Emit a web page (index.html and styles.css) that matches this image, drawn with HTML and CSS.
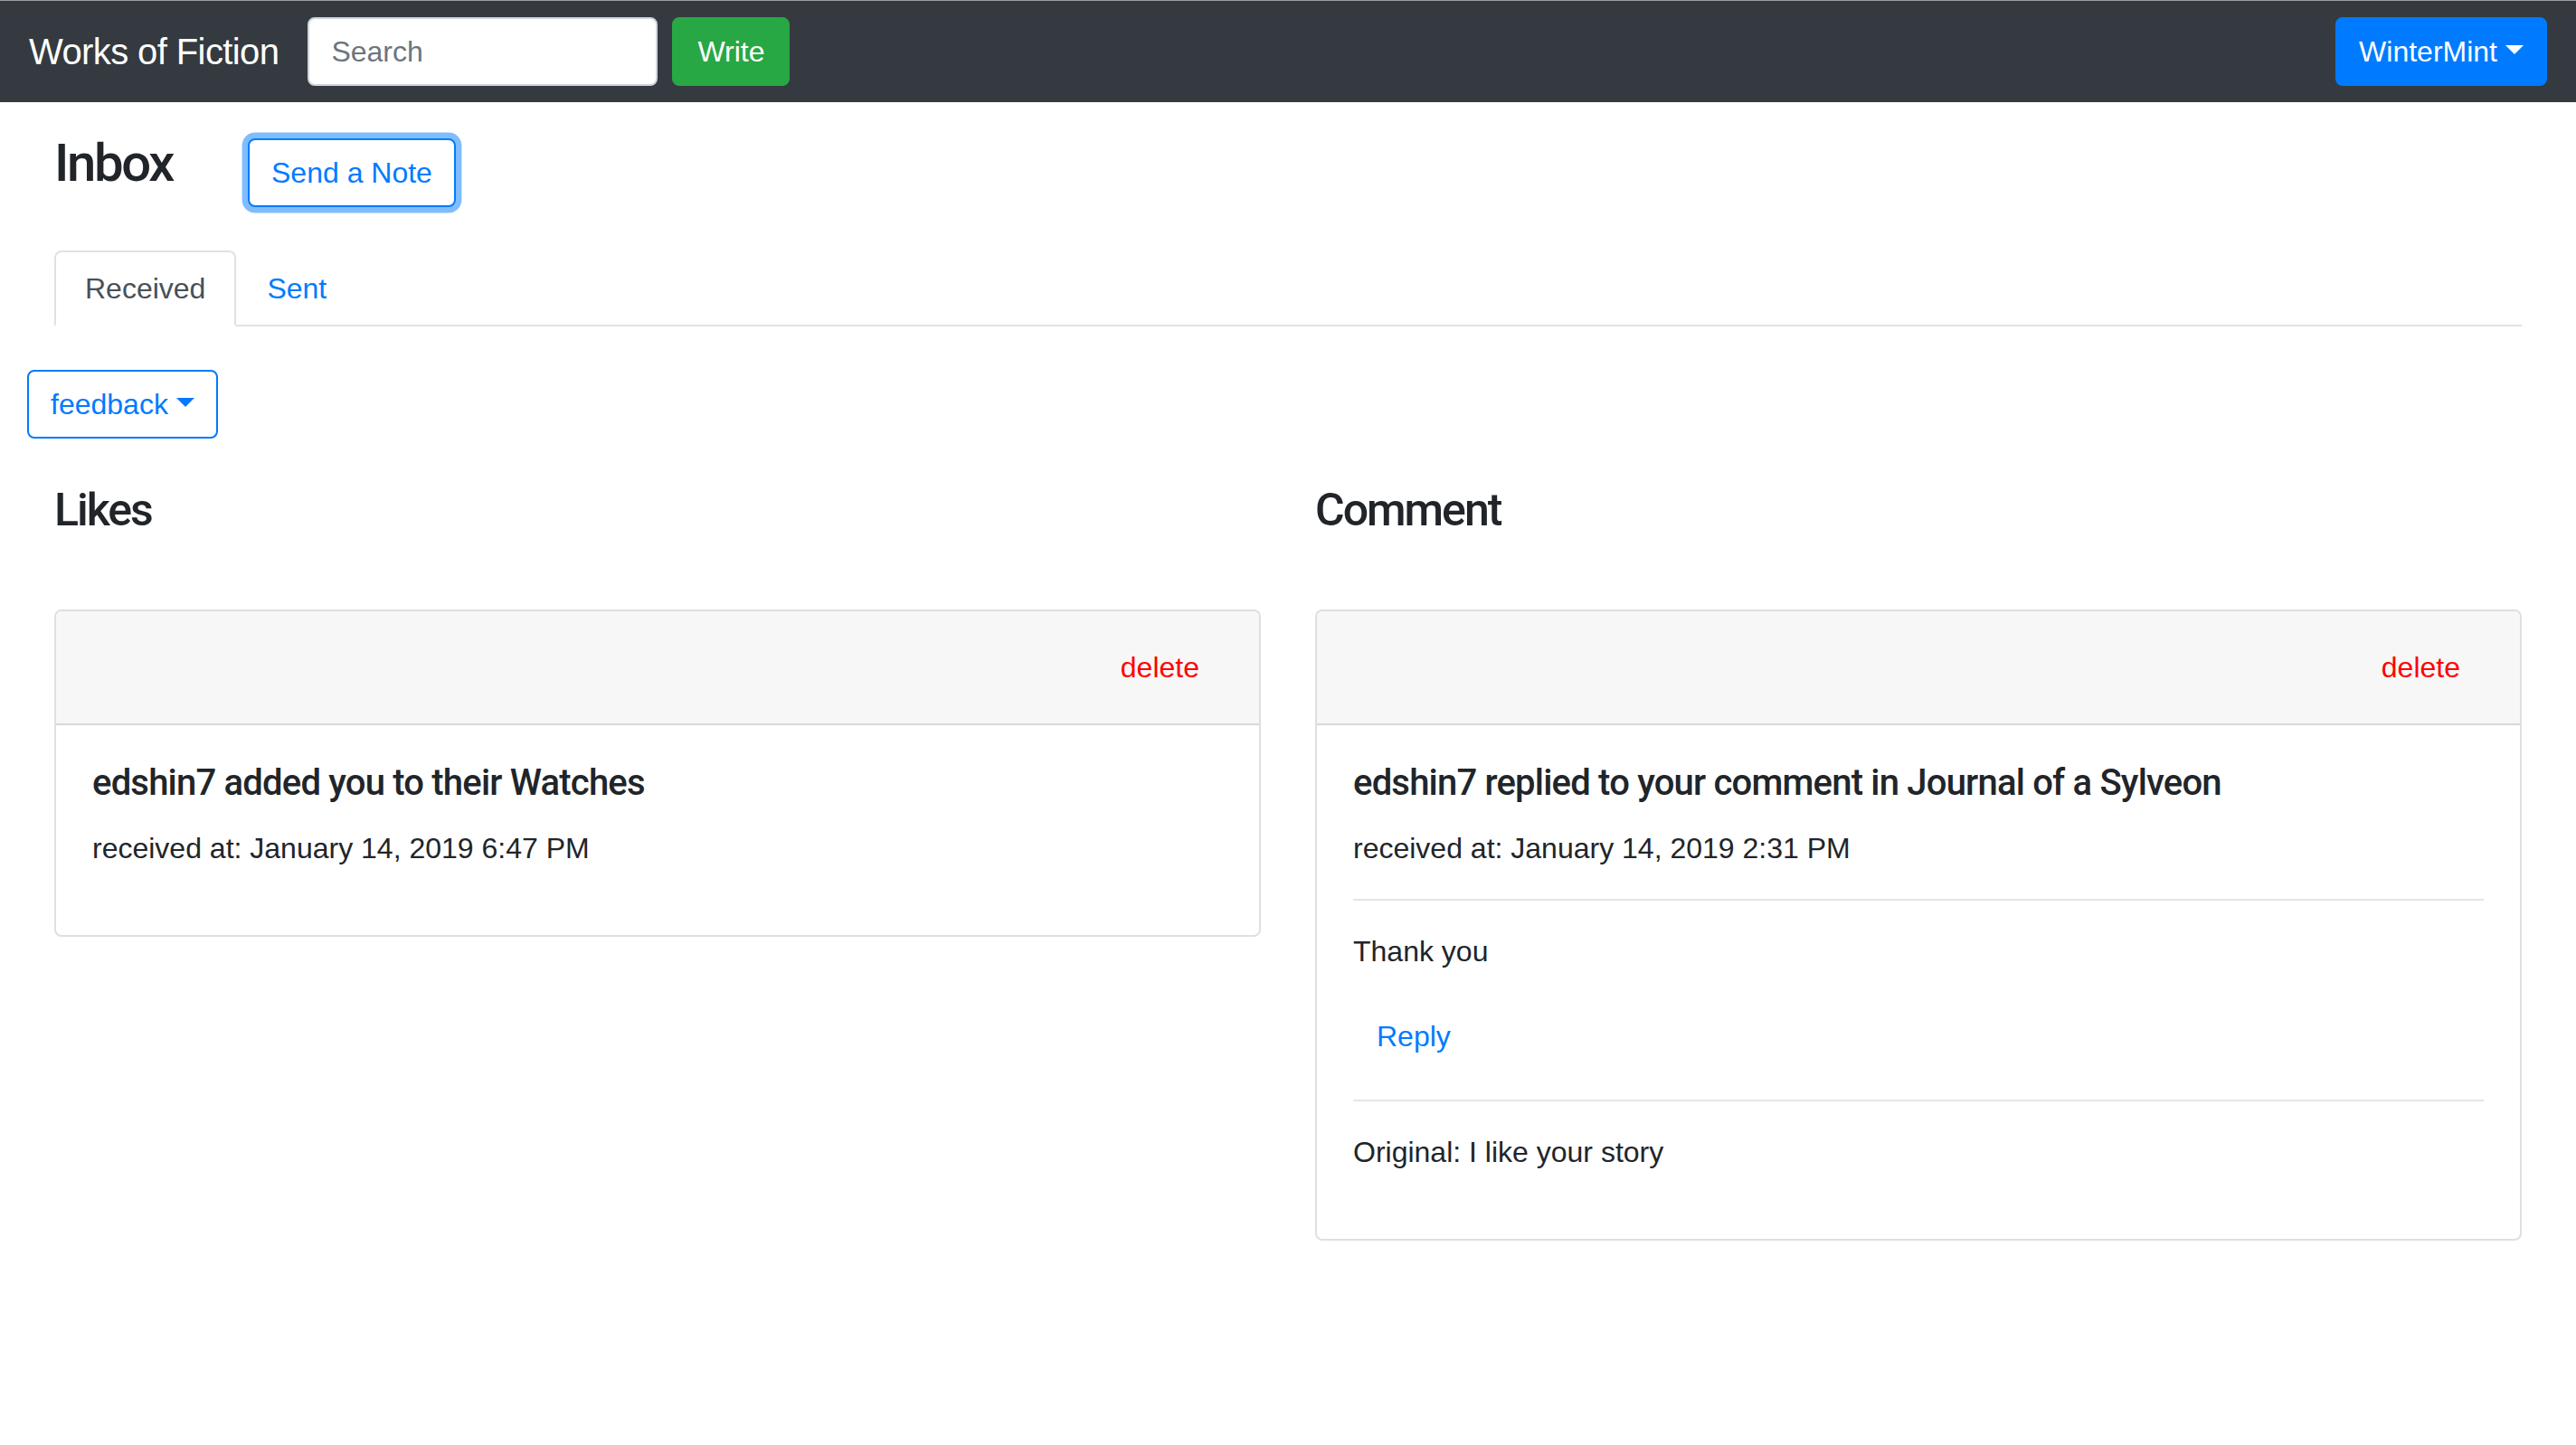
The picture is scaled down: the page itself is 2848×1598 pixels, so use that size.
FILE: index.html
```html
<!DOCTYPE html>
<html lang="en">
<head>
<meta charset="utf-8">
<title>Inbox - Works of Fiction</title>
<link rel="stylesheet" href="styles.css">
</head>
<body>
<nav class="navbar">
  <div class="nav-left">
    <a class="brand" href="#">Works of Fiction</a>
    <input class="search" type="text" placeholder="Search">
    <button class="btn btn-success">Write</button>
  </div>
  <button class="btn btn-primary caret">WinterMint</button>
</nav>

<main class="page">
  <div class="inbox-row">
    <h2 class="page-title">Inbox</h2>
    <button class="btn btn-outline focus">Send a Note</button>
  </div>

  <ul class="tabs">
    <li><a class="tab active" href="#">Received</a></li>
    <li><a class="tab" href="#">Sent</a></li>
  </ul>

  <div class="filter">
    <button class="btn btn-outline caret">feedback</button>
  </div>

  <div class="columns">
    <section class="col">
      <h3 class="col-title">Likes</h3>
      <div class="card">
        <div class="card-header"><button class="btn btn-delete">delete</button></div>
        <div class="card-body">
          <h5 class="card-title">edshin7 added you to their Watches</h5>
          <p>received at: January 14, 2019 6:47 PM</p>
        </div>
      </div>
    </section>
    <section class="col">
      <h3 class="col-title">Comment</h3>
      <div class="card">
        <div class="card-header"><button class="btn btn-delete">delete</button></div>
        <div class="card-body">
          <h5 class="card-title">edshin7 replied to your comment in Journal of a Sylveon</h5>
          <p>received at: January 14, 2019 2:31 PM</p>
          <hr>
          <p>Thank you</p>
          <button class="btn btn-link">Reply</button>
          <hr>
          <p>Original: I like your story</p>
        </div>
      </div>
    </section>
  </div>
</main>
</body>
</html>
```

FILE: styles.css
```css
* { box-sizing: border-box; }

html, body { margin: 0; }

body {
  font-family: "Liberation Sans", Arial, sans-serif;
  font-size: 32px;
  line-height: 1.5;
  color: #212529;
  background: #fff;
}

a { text-decoration: none; }

/* ---------- navbar ---------- */
.navbar {
  display: flex;
  align-items: center;
  justify-content: space-between;
  background: #343a40;
  border-top: 1px solid #9c9ea1;
  padding: 16px 32px;
}

.nav-left {
  display: flex;
  align-items: center;
}

.brand {
  font-size: 40px;
  line-height: 60px;
  letter-spacing: -0.6px;
  padding: 10px 0;
  margin-right: 32px;
  color: #fff;
}

.search {
  width: 387px;
  height: 76px;
  padding: 12px 24px;
  font-family: inherit;
  font-size: 32px;
  line-height: 48px;
  border: 2px solid #ced4da;
  border-radius: 8px;
  color: #495057;
  background: #fff;
  margin: 0 16px 0 0;
}

.search::placeholder { color: #6c757d; }

/* ---------- buttons ---------- */
.btn {
  display: inline-block;
  font-family: inherit;
  font-size: 32px;
  line-height: 48px;
  padding: 12px 24px;
  border: 2px solid transparent;
  border-radius: 8px;
  background: transparent;
  white-space: nowrap;
  cursor: pointer;
}

.btn-success { background: #28a745; border-color: #28a745; color: #fff; padding: 12px 26px; }
.btn-primary { background: #007bff; border-color: #007bff; color: #fff; }
.btn-outline { background: #fff; border-color: #007bff; color: #007bff; }
.btn-link { color: #007bff; }
.btn-delete { color: #ff0000; float: right; }

.focus { box-shadow: 0 0 0 6.4px rgba(0, 123, 255, 0.5); }

.caret::after {
  content: "";
  display: inline-block;
  margin-left: 9px;
  vertical-align: 8.16px;
  border-top: 10px solid;
  border-right: 10px solid transparent;
  border-left: 10px solid transparent;
  border-bottom: 0;
}

/* ---------- page ---------- */
.page { padding: 0 30px 60px; }

.inbox-row {
  display: flex;
  align-items: flex-start;
  padding: 31px 30px 0;
}

.page-title {
  width: 214px;
  margin: 0;
  font-family: Roboto, "Liberation Sans", sans-serif;
  font-weight: 500;
  font-size: 58px;
  line-height: 72px;
  letter-spacing: -0.04em;
}

.inbox-row .btn { margin-top: 9px; }

.tabs {
  display: flex;
  list-style: none;
  margin: 48px 30px 0;
  padding: 0;
  border-bottom: 2px solid #dee2e6;
}

.tabs li { margin-bottom: -2px; }

.tab {
  display: block;
  padding: 16px 32px;
  line-height: 48px;
  border: 2px solid transparent;
  border-radius: 8px 8px 0 0;
  color: #007bff;
}

.tab.active {
  color: #495057;
  background: #fff;
  border-color: #dee2e6 #dee2e6 #fff;
}

.filter { margin-top: 48px; }

.columns {
  display: grid;
  grid-template-columns: 1fr 1fr;
  column-gap: 60px;
  align-items: start;
  padding: 0 30px;
  margin-top: 48px;
}

.col-title {
  margin: 0 0 79px;
  font-family: Roboto, "Liberation Sans", sans-serif;
  font-weight: 500;
  font-size: 50px;
  line-height: 62px;
  letter-spacing: -0.04em;
}

/* ---------- cards ---------- */
.card {
  border: 2px solid rgba(0, 0, 0, 0.125);
  border-radius: 8px;
  background: #fff;
  overflow: hidden;
}

.card-header {
  background: #f7f7f7;
  border-bottom: 2px solid rgba(0, 0, 0, 0.125);
  padding: 24px 40px;
  height: 126px;
}

.card-body { padding: 40px; }

.card-title {
  margin: 0 0 24px;
  font-family: Roboto, "Liberation Sans", sans-serif;
  font-weight: 500;
  font-size: 40px;
  line-height: 48px;
  letter-spacing: -0.02em;
}

.card-body p { margin: 0 0 32px; }

.card-body hr {
  margin: 32px 0;
  border: 0;
  border-top: 2px solid rgba(0, 0, 0, 0.1);
}
```
